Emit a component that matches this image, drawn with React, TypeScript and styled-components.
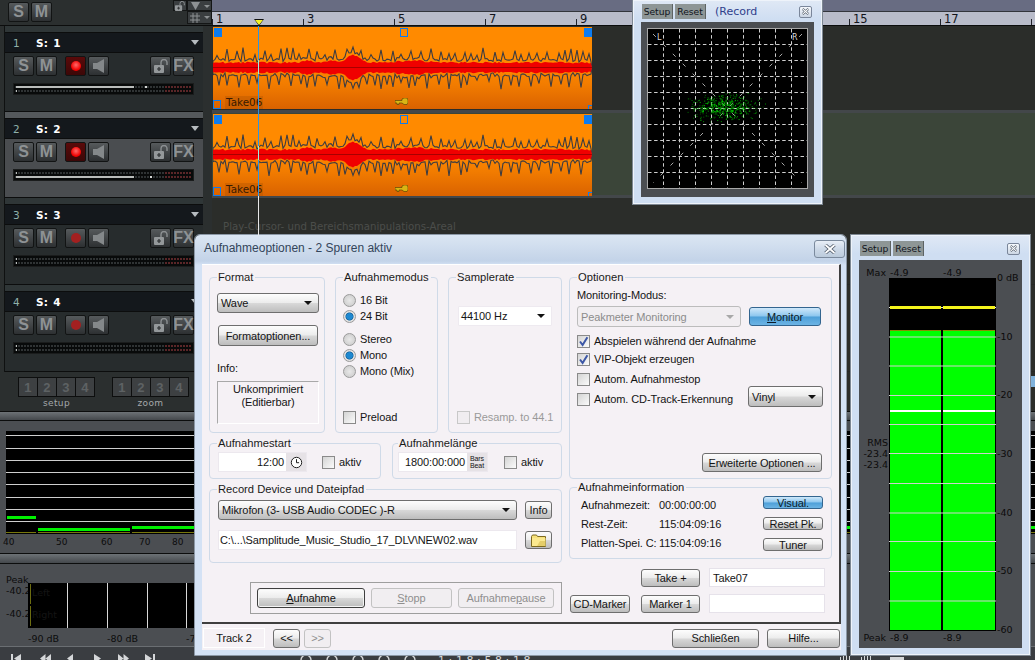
import { useMemo } from 'react';
import styled, { createGlobalStyle, css } from 'styled-components';

const GlobalStyle = createGlobalStyle`
  html, body { margin: 0; padding: 0; background: #2b2d2a; overflow: hidden; }
  * { box-sizing: border-box; }
`;

const MONO_UI = `"DejaVu Sans", sans-serif`;
const WIN_UI = `"Liberation Sans", Arial, sans-serif`;

function seeded(seed: number) {
  let s = seed;
  return () => {
    s = (s * 1664525 + 1013904223) % 4294967296;
    return s / 4294967296;
  };
}

/* ---------- waveform + scope data ---------- */

function buildWave() {
  const rnd = seeded(77);
  const W = 379;
  const C = 40.5;
  let upPeak = `M0 ${C}`;
  let downPeak = `M0 ${C}`;
  let upRms = `M0 ${C}`;
  let downRms = `M0 ${C}`;
  let nextUp = 3;
  let nextDown = 6;
  for (let x = 0; x <= W; x += 2) {
    const bump =
      8 * Math.exp(-((x - 140) ** 2) / 70) +
      2 * Math.exp(-((x - 95) ** 2) / 60) +
      2 * Math.exp(-((x - 118) ** 2) / 40) +
      2 * Math.exp(-((x - 200) ** 2) / 300);
    const rms = 4 + bump + rnd() * 1.8;
    let up = rms + 1 + rnd() * 3;
    let down = rms + 1 + rnd() * 3;
    if (x >= nextUp) {
      up = Math.max(up + 4, 12 + rnd() * 8);
      nextUp = x + 4 + rnd() * 7;
    }
    if (x >= nextDown) {
      down = Math.max(down + 4, 12 + rnd() * 10);
      nextDown = x + 4 + rnd() * 8;
    }
    upPeak += ` L${x} ${(C - up).toFixed(1)}`;
    downPeak += ` L${x} ${(C + down).toFixed(1)}`;
    upRms += ` L${x} ${(C - rms).toFixed(1)}`;
    downRms += ` L${x} ${(C + rms).toFixed(1)}`;
  }
  const close = ` L${W} ${C} Z`;
  return {
    peak: [upPeak + close, downPeak + close],
    rms: [upRms + close, downRms + close],
  };
}

function buildScatter() {
  const rnd = seeded(412);
  const gauss = () => (rnd() + rnd() + rnd() - 1.5) / 1.5;
  return Array.from({ length: 520 }, () => ({
    x: 78 + gauss() * 44,
    y: 79 + gauss() * 17,
    o: 0.35 + rnd() * 0.6,
  }));
}

/* ---------- page shell ---------- */

const Screen = styled.div`
  position: relative;
  width: 1035px;
  height: 660px;
  overflow: hidden;
  background: #2b2d2a;
  font-family: ${MONO_UI};
`;

const Daw = styled.div`
  display: flex;
  flex-direction: column;
  height: 660px;
`;

const Upper = styled.div`
  display: flex;
  height: 411px;
`;

const TrackColumn = styled.div`
  width: 212px;
  flex: none;
  background: #2b2f2f;
`;

const TopBar = styled.div`
  display: flex;
  justify-content: space-between;
  height: 26px;
  padding: 2px 0 0 8px;
  border-bottom: 1px solid #0c0d0d;
`;

const TopButtons = styled.div`
  display: flex;
`;

const SmallGrid = styled.div`
  display: grid;
  grid-template-columns: 14px 25px;
  grid-template-rows: 11px 13px;
  margin-top: -2px;
`;

const SmallCell = styled.div<{ $col?: number }>`
  display: flex;
  align-items: center;
  justify-content: center;
  gap: 3px;
  grid-column: ${(p) => p.$col ?? 'auto'};
  background: #3a3e40;
  border: 1px solid #141616;
  color: #8d9193;
`;

const TrackRail = styled.div`
  display: flex;
`;

const Rail = styled.div`
  width: 5px;
  border-right: 1px solid #0f1111;
  height: 346px;
  flex: none;
`;

const Tracks = styled.div`
  width: 198px;
  flex: none;
`;

const TrackBox = styled.div<{ $h: number; $active?: boolean }>`
  height: ${(p) => p.$h}px;
  border-bottom: 1px solid #0c0d0d;
  background: ${(p) => (p.$active ? '#4a4d50' : '#272c2d')};
`;

const TrackStrip = styled.div<{ $active?: boolean }>`
  height: 7px;
  background: ${(p) => (p.$active ? '#54585b' : '#2f3637')};
  border-bottom: 1px solid #0c0d0d;
`;

const TrackHead = styled.div`
  display: flex;
  align-items: center;
  height: 20px;
  padding-left: 8px;
  background: #14181c;
  border-bottom: 1px solid #0c0d0d;
  font-size: 10.5px;
  font-weight: 700;
  color: #fff;
`;

const TrackNo = styled.span`
  width: 23px;
  font-weight: 400;
  color: #8fb0aa;
`;

const TrackName = styled.span`
  flex: 1;
  letter-spacing: 0.3px;
  word-spacing: 1px;
`;

const Chevron = styled.i`
  width: 0;
  height: 0;
  margin-right: 4px;
  border-left: 4px solid transparent;
  border-right: 4px solid transparent;
  border-top: 5px solid #b7bcc0;
`;

const ButtonRow = styled.div`
  display: flex;
  padding: 3px 0 0 8px;
`;

const DarkBtn = styled.div<{ $w?: number; $big?: boolean; $gap?: number }>`
  display: flex;
  align-items: center;
  justify-content: center;
  width: ${(p) => p.$w ?? 21}px;
  height: 20px;
  margin-left: ${(p) => p.$gap ?? 2}px;
  border: 1px solid #121414;
  border-radius: 2px;
  background: linear-gradient(#565a5c, #2d3032);
  color: #8e9294;
  font-family: ${WIN_UI};
  font-weight: 700;
  font-size: 16px;
  &:first-child { margin-left: 0; }
`;

const RecBtn = styled(DarkBtn)<{ $armed?: boolean }>`
  background: ${(p) => (p.$armed ? 'linear-gradient(#5a0a0a, #3c0808)' : 'linear-gradient(#565a5c, #2d3032)')};
`;

const RecDot = styled.i<{ $armed?: boolean }>`
  width: 10px;
  height: 10px;
  border-radius: 50%;
  background: ${(p) => (p.$armed ? 'radial-gradient(circle at 50% 40%, #ff6a6a, #f00000 65%)' : '#a32020')};
`;

const LevelMeter = styled.div`
  display: flex;
  flex-direction: column;
  gap: 2px;
  width: 181px;
  height: 12px;
  margin: 7px 0 0 8px;
  padding: 2px 1px;
  background: #080a0a;
  border: 1px solid #1a1c1c;
`;

const LevelRow = styled.div`
  position: relative;
  height: 3px;
  background:
    repeating-linear-gradient(90deg, transparent 0 2px, #080a0a 2px 3px),
    linear-gradient(90deg, #2f3334 0 85%, #5a2628 85% 100%);
`;

const LevelFill = styled.i<{ $w: number }>`
  position: absolute;
  left: 1px;
  top: 0;
  bottom: 0;
  width: ${(p) => p.$w}px;
  background: #b9bcba;
`;

const LevelPeak = styled.i<{ $x: number }>`
  position: absolute;
  left: ${(p) => p.$x}px;
  top: 0;
  bottom: 0;
  width: 2px;
  background: #d6d8d6;
`;

const SetupRow = styled.div`
  display: flex;
  gap: 17px;
  padding: 5px 0 0 18px;
`;

const KeyGroup = styled.div`
  width: 77px;
  text-align: center;
  color: #a4a8aa;
  font-size: 9px;
  letter-spacing: 0.4px;
`;

const KeyRow = styled.div`
  display: flex;
  height: 20px;
  margin-bottom: 1px;
  border: 1px solid #0d0e0e;
  background: #0d0e0e;
  gap: 1px;
`;

const KeyCap = styled.span`
  flex: 1;
  display: flex;
  align-items: center;
  justify-content: center;
  background: #3d4042;
  color: #5e6264;
  font-family: ${WIN_UI};
  font-size: 13px;
  font-weight: 700;
`;

/* ---------- arrangement ---------- */

const Arrange = styled.div`
  position: relative;
  flex: 1;
  min-width: 0;
  background: #2b2d2a;
`;

const RulerTop = styled.div`
  height: 12px;
  background: #686c82;
  border-bottom: 1px solid #33353c;
`;

const Ruler = styled.div`
  display: flex;
  height: 14px;
  background: #b9bcca;
  border-bottom: 1px solid #0c0d0d;
`;

const RulerCell = styled.div`
  flex: none;
  width: 91px;
  position: relative;
  padding-left: 4px;
  font-size: 11.5px;
  line-height: 14px;
  color: #12141c;
  &::before {
    content: '';
    position: absolute;
    left: 0;
    bottom: 0;
    height: 6px;
    border-left: 1px solid #20222a;
  }
`;

const PlayCursor = styled.div`
  position: absolute;
  z-index: 3;
  left: 42px;
  top: 19px;
  width: 10px;
  height: 7px;
  background: #111;
  clip-path: polygon(0 0, 100% 0, 50% 100%);
  &::after {
    content: '';
    position: absolute;
    left: 1px;
    top: 1px;
    width: 8px;
    height: 5px;
    background: #f4f42a;
    clip-path: polygon(0 0, 100% 0, 50% 100%);
  }
`;

const CursorLine = styled.div`
  position: absolute;
  z-index: 2;
  left: 46px;
  top: 26px;
  width: 1px;
  height: 210px;
  background: linear-gradient(
    #2e95e4 0 34px,
    #9fe8e0 34px 48px,
    #2e95e4 48px 120px,
    #9fe8e0 120px 134px,
    #2e95e4 134px 170px,
    #e8e8e8 170px 210px
  );
`;

const Lane = styled.div<{ $h: number; $green?: boolean }>`
  height: ${(p) => p.$h}px;
  padding: 1px 0 0 1px;
  background: ${(p) => (p.$green ? '#3b4539' : '#2b2d2a')};
  border-bottom: 3px solid #43474a;
`;

const PlainLane = styled.div<{ $h: number }>`
  height: ${(p) => p.$h}px;
  padding: 23px 0 0 11px;
  border-bottom: 1px solid #262826;
  color: #4b4d4a;
  font-size: 10.2px;
`;

const ScrollTail = styled.div`
  display: flex;
  justify-content: flex-end;
  padding-top: 4px;
`;

const ScrollThumb = styled.i`
  width: 5px;
  height: 11px;
  background: #7fb2dc;
`;

const Clip = styled.div`
  position: relative;
  width: 379px;
  height: 82px;
  background: linear-gradient(#ff8a00 0 45%, #f27c00 70%, #d96200);
`;

const WaveSvg = styled.svg`
  display: block;
`;

const Handle = styled.i<{ $x: number; $y: number; $fill?: boolean }>`
  position: absolute;
  left: ${(p) => p.$x}px;
  top: ${(p) => p.$y}px;
  width: 8px;
  height: 9px;
  border: 1px solid #0d7cf0;
  background: ${(p) => (p.$fill ? '#0d7cf0' : 'transparent')};
`;

const ClipName = styled.span`
  position: absolute;
  left: 12px;
  bottom: 0;
  padding: 0 1px;
  font-size: 10.4px;
  line-height: 13px;
  color: #3a1a00;
  background: rgba(150, 70, 0, 0.25);
`;

const KeyIcon = styled.svg`
  position: absolute;
  left: 182px;
  top: 71px;
`;

const ClipEnd = styled.i`
  position: absolute;
  right: 0;
  bottom: 0;
  width: 4px;
  height: 4px;
  border-left: 1px solid #0d7cf0;
  border-top: 1px solid #0d7cf0;
`;

/* ---------- lower panels ---------- */

const GreyStrip = styled.div<{ $h: number }>`
  height: ${(p) => p.$h}px;
  background: linear-gradient(#6d7276, #44484c);
  border-top: 1px solid #0c0d0d;
  border-bottom: 1px solid #0c0d0d;
  flex: none;
`;

const SpectrumPanel = styled.div`
  height: 132px;
  flex: none;
  padding: 10px 0 0 6px;
  background: #4b4e52;
`;

const SpectrumFace = styled.svg`
  display: block;
  background: #000;
`;

const Axis = styled.div`
  display: flex;
  margin: 3px 0 0 -3px;
  color: #0c0c0c;
  font-size: 9px;
`;

const AxisTick = styled.span<{ $w: number }>`
  width: ${(p) => p.$w}px;
  flex: none;
`;

const PeakPanel = styled.div`
  display: grid;
  grid-template-columns: 22px 1fr;
  height: 82px;
  flex: none;
  padding: 10px 0 0 6px;
  background: #4b4e52;
  color: #0c0c0c;
  font-size: 9.5px;
`;

const PeakLabels = styled.div`
  display: flex;
  flex-direction: column;
  line-height: 11px;
  & > :nth-child(3) { margin-top: 12px; }
`;

const PeakChart = styled.div`
  position: relative;
  width: 812px;
  height: 45px;
  margin-top: 9px;
  background: #000;
  color: #141414;
`;

const Channel = styled.span<{ $top: number }>`
  position: absolute;
  left: 2px;
  top: ${(p) => p.$top}px;
  padding-left: 1px;
  border-left: 1px solid #6c6c10;
  height: 20px;
  line-height: 18px;
`;

const DbLine = styled.i<{ $x: number }>`
  position: absolute;
  left: ${(p) => p.$x}px;
  top: 0;
  bottom: 0;
  width: 1px;
  background: #d8d8d8;
`;

const DbAxis = styled.div`
  display: flex;
  grid-column: 2;
  margin-top: 2px;
`;

const DbTick = styled.span`
  width: 79px;
  flex: none;
`;

const Transport = styled.div`
  display: flex;
  align-items: flex-start;
  flex: 1;
  padding: 7px 0 0 11px;
  background: #3a3d41;
  border-top: 1px solid #6a6e72;
  color: #d8d8d8;
  overflow: hidden;
`;

const TransportIcon = styled.svg<{ $gap: number }>`
  flex: none;
  margin-right: ${(p) => p.$gap}px;
  fill: #d5d7d9;
`;

const Counter = styled.span`
  flex: none;
  width: 402px;
  margin-left: 8px;
  font-size: 11px;
  letter-spacing: 3.6px;
`;

/* ---------- floating windows ---------- */

const FloatWindow = styled.div<{ $x: number; $y: number; $w: number; $h: number }>`
  position: absolute;
  left: ${(p) => p.$x}px;
  top: ${(p) => p.$y}px;
  width: ${(p) => p.$w}px;
  height: ${(p) => p.$h}px;
  padding: 0 7px;
  background: linear-gradient(#dfe8f5, #cfdef2 18px);
  border: 1px solid #eef3fa;
  outline: 1px solid #7d8792;
`;

const ToolHead = styled.div<{ $h: number }>`
  display: flex;
  align-items: center;
  gap: 2px;
  height: ${(p) => p.$h}px;
  padding-left: 1px;
`;

const ToolBtn = styled.span`
  display: flex;
  align-items: center;
  justify-content: center;
  width: 31px;
  height: 15px;
  background: #8e9696;
  border-right: 1px solid #5d6363;
  color: #10141c;
  font-size: 9.2px;
`;

const WinTitle = styled.span`
  flex: 1;
  margin-left: 7px;
  color: #2f3f8c;
  font-size: 11px;
`;

const MiniClose = styled.span`
  display: flex;
  align-items: center;
  justify-content: center;
  width: 13px;
  height: 12px;
  margin-right: 2px;
  border: 1px solid #7a869a;
  border-radius: 2px;
  background: linear-gradient(#f6f9fd, #ccd6e4);
`;

const ScopePanel = styled.div`
  padding: 6px;
  height: 175px;
  background: #4b4e52;
`;

const ScopeFace = styled.svg`
  display: block;
  background: #000;
  outline: 1px solid #a8a8a8;
  outline-offset: -1px;
`;

const MeterPanel = styled.div`
  display: grid;
  grid-template-columns: 30px 107px 1fr;
  grid-template-rows: 18px 353px 1fr;
  height: 388px;
  margin-top: -1px;
  background: #4b4e52;
  color: #0b0b0b;
  font-size: 9.5px;
`;

const MeterLegend = styled.span`
  display: flex;
  align-items: flex-end;
  justify-content: flex-end;
  padding-right: 3px;
`;

const MeterValues = styled.span`
  display: flex;
  align-items: flex-end;
  padding-left: 1px;
  & > span { width: 54px; }
`;

const RmsColumn = styled.div`
  display: flex;
  flex-direction: column;
  align-items: flex-end;
  padding: 159px 1px 0 0;
  line-height: 11px;
`;

const MeterFace = styled.svg`
  display: block;
  background: #000;
`;

const ScaleColumn = styled.div`
  display: flex;
  flex-direction: column;
  justify-content: space-between;
  height: 364px;
  margin-top: -6px;
  padding-left: 1px;
  line-height: 12px;
`;

const MeterFoot = styled(MeterValues)`
  align-items: flex-start;
  padding-top: 1px;
`;

const MeterFootLegend = styled(MeterLegend)`
  align-items: flex-start;
  padding-top: 1px;
`;

/* ---------- recording dialog ---------- */

const Dialog = styled.div`
  position: absolute;
  left: 195px;
  top: 235px;
  width: 651px;
  height: 420px;
  padding: 0 5px 5px 7px;
  border-radius: 5px 5px 0 0;
  background: linear-gradient(#dbe6f3, #c3d3e8 26px, #d4e2f5 30px);
  outline: 1px solid #8c98a6;
  font-family: ${WIN_UI};
  font-size: 11px;
  letter-spacing: -0.1px;
  color: #141414;
`;

const DialogTitle = styled.div`
  display: flex;
  align-items: center;
  justify-content: space-between;
  height: 29px;
  padding: 0 0 4px 2px;
  color: #33455a;
  font-size: 12px;
  letter-spacing: 0;
`;

const DialogClose = styled.span`
  display: flex;
  align-items: center;
  justify-content: center;
  width: 31px;
  height: 18px;
  margin: 3px -4px 0 0;
  border: 1px solid #7b8a9d;
  border-radius: 3px;
  background: linear-gradient(#e8eef6, #cdd9e8 50%, #bccbdc);
`;

const DialogBody = styled.div`
  height: 386px;
  background: #f5f1f5;
`;

const MainPanel = styled.div`
  display: flex;
  gap: 7px;
  height: 360px;
  padding: 5px 0 0 7px;
  border-top: 1px solid #fff;
  border-right: 2px solid #3f3f3f;
  border-bottom: 2px solid #3f3f3f;
`;

const LeftCol = styled.div`
  width: 353px;
  flex: none;
`;

const RightCol = styled.div`
  width: 263px;
  flex: none;
`;

const Row = styled.div<{ $gap: number; $top?: number }>`
  display: flex;
  gap: ${(p) => p.$gap}px;
  margin-top: ${(p) => p.$top ?? 0}px;
`;

const Group = styled.fieldset<{ $w: number; $h: number; $top?: number; $legend?: number }>`
  flex: none;
  min-width: 0;
  width: ${(p) => p.$w}px;
  height: ${(p) => p.$h}px;
  margin: ${(p) => p.$top ?? 0}px 0 0;
  padding: 0 7px;
  border: 1px solid #cfdae8;
  border-radius: 4px;
  & > legend {
    margin-left: ${(p) => p.$legend ?? 0}px;
    padding: 0 2px 0 1px;
    line-height: 14px;
    font-size: 11.2px;
    letter-spacing: 0;
    color: #1a1a1a;
  }
`;

const buttonFace = css`
  background: linear-gradient(#fdfdfd, #ececec 48%, #d8d8d8 52%, #bdbdbd);
  border: 1px solid #6e6e6e;
  border-radius: 3px;
  color: #141414;
`;

const Btn = styled.div<{ $w: number; $h: number; $tone?: 'blue' | 'off' | 'default' }>`
  display: flex;
  align-items: center;
  justify-content: center;
  flex: none;
  width: ${(p) => p.$w}px;
  height: ${(p) => p.$h}px;
  white-space: nowrap;
  ${buttonFace}
  ${(p) =>
    p.$tone === 'blue' &&
    css`
      background: linear-gradient(#cfe8fa, #8cc6ee 48%, #4d9fd8 52%, #6cb4e4);
      border-color: #33658f;
      color: #0c1c28;
    `}
  ${(p) =>
    p.$tone === 'off' &&
    css`
      background: #f1eef1;
      border-color: #c2c2c2;
      color: #8f8f8f;
    `}
  ${(p) =>
    p.$tone === 'default' &&
    css`
      border: 1px solid #3f3f3f;
      box-shadow: inset 0 0 0 1px #f4f4f4;
    `}
  u { text-underline-offset: 1px; }
`;

const Combo = styled.div<{ $w: number; $h: number; $plain?: boolean; $off?: boolean }>`
  display: flex;
  align-items: center;
  justify-content: space-between;
  flex: none;
  width: ${(p) => p.$w}px;
  height: ${(p) => p.$h}px;
  padding: 0 6px 0 3px;
  white-space: nowrap;
  ${buttonFace}
  ${(p) =>
    p.$plain &&
    css`
      padding-left: 2px;
      background: #fff;
      border-color: #eeeaf0;
      border-radius: 1px;
    `}
  ${(p) =>
    p.$off &&
    css`
      background: #f1eef1;
      border-color: #bcbcbc;
      color: #8c8c8c;
    `}
`;

const ComboArrow = styled.i<{ $off?: boolean }>`
  width: 0;
  height: 0;
  border-left: 4px solid transparent;
  border-right: 4px solid transparent;
  border-top: 4px solid ${(p) => (p.$off ? '#a8a8a8' : '#111')};
`;

const FormatBody = styled.div`
  display: flex;
  flex-direction: column;
  padding-top: 9px;
`;

const FormatBtn = styled(Btn)`
  margin: 12px 0 0 1px;
`;

const InfoLabel = styled.div`
  margin-top: 16px;
  line-height: 13px;
`;

const InfoBox = styled.div`
  height: 43px;
  margin-top: 6px;
  width: 102px;
  padding-top: 1px;
  text-align: center;
  line-height: 13px;
  border: 1px solid #fff;
  border-top-color: #a8a8a8;
  border-left-color: #a8a8a8;
`;

const RadioList = styled.div<{ $top: number }>`
  margin-top: ${(p) => p.$top}px;
`;

const OptionRow = styled.label<{ $h?: number; $off?: boolean }>`
  display: flex;
  align-items: center;
  gap: 4px;
  height: ${(p) => p.$h ?? 16}px;
  white-space: nowrap;
  color: ${(p) => (p.$off ? '#9a9a9a' : 'inherit')};
`;

const RadioDot = styled.i<{ $on?: boolean }>`
  flex: none;
  width: 13px;
  height: 13px;
  border-radius: 50%;
  border: 1px solid #9a9a9a;
  background: ${(p) =>
    p.$on
      ? 'radial-gradient(circle, #1e88d0 0 3px, #0a5c98 3.5px, #e6e6e6 4.5px, #d0d0d0)'
      : 'radial-gradient(circle, #e8e8e8, #c8c8c8)'};
`;

const CheckBox = styled.i<{ $off?: boolean }>`
  flex: none;
  display: flex;
  align-items: center;
  justify-content: center;
  width: 13px;
  height: 13px;
  border: 1px solid ${(p) => (p.$off ? '#c8c8c8' : '#8a8a8a')};
  background: ${(p) => (p.$off ? '#f0edf0' : 'linear-gradient(135deg, #d4d4d4, #fbfbfb)')};
`;

const Spacer = styled.div<{ $h: number }>`
  height: ${(p) => p.$h}px;
`;

const SampleBody = styled.div`
  padding: 22px 0 0 2px;
`;

const ResampRow = styled(OptionRow)`
  margin: 83px 0 0 -1px;
`;

const FieldRow = styled.div`
  display: flex;
  align-items: center;
  margin-top: 2px;
`;

const TimeField = styled.div<{ $w: number; $left: number }>`
  display: flex;
  align-items: center;
  justify-content: flex-end;
  flex: none;
  width: ${(p) => p.$w}px;
  height: 20px;
  margin-left: ${(p) => p.$left}px;
  background: #fff;
  border: 1px solid #ece8ee;
  white-space: nowrap;
  font-size: 11px;
`;

const FieldSuffix = styled.span`
  display: flex;
  flex-direction: column;
  align-items: center;
  justify-content: center;
  align-self: stretch;
  width: 20px;
  margin-left: 2px;
  background: #e6e2e6;
  font-size: 7px;
  line-height: 7px;
`;

const AktivRow = styled(OptionRow)<{ $left: number }>`
  margin-left: ${(p) => p.$left}px;
`;

const DeviceBody = styled.div`
  display: grid;
  grid-template-columns: 299px 27px;
  column-gap: 8px;
  align-items: center;
  padding: 4px 0 0 1px;
`;

const PathField = styled.div`
  display: flex;
  align-items: center;
  height: 20px;
  margin-top: 10px;
  padding-left: 1px;
  background: #fff;
  border: 1px solid #ece8ee;
  white-space: nowrap;
  overflow: hidden;
`;

const SideBtn = styled(Btn)<{ $down?: number }>`
  margin-top: ${(p) => p.$down ?? 0}px;
`;

const ActionBox = styled.div`
  display: flex;
  justify-content: space-between;
  width: 312px;
  height: 32px;
  margin: 19px 0 0 41px;
  padding: 5px 7px 0 6px;
  border: 1px solid #9e9e9e;
`;

const OptionsBody = styled.div`
  display: flex;
  flex-direction: column;
`;

const MonitorLabel = styled.div`
  margin-top: 5px;
  line-height: 13px;
`;

const MonitorRow = styled.div`
  display: flex;
  align-items: center;
  gap: 8px;
  margin-top: 4px;
`;

const AutoRow = styled.div`
  display: flex;
  align-items: center;
  justify-content: space-between;
  padding-right: 1px;
  height: 18px;
`;

const VinylCombo = styled(Combo)`
  margin-top: -5px;
`;

const ExtraBtn = styled(Btn)`
  align-self: flex-end;
  margin: 45px 2px 0 0;
`;

const InfoBody = styled.div`
  display: flex;
  justify-content: space-between;
  padding: 2px 1px 0 4px;
`;

const InfoLines = styled.div`
  display: grid;
  grid-template-columns: 78px auto;
  grid-auto-rows: 19px;
  align-items: center;
  margin-top: -1px;
  white-space: nowrap;
`;

const InfoButtons = styled.div`
  display: flex;
  flex-direction: column;
  gap: 8px;
`;

const TakeRow = styled.div<{ $top: number }>`
  display: flex;
  align-items: center;
  margin-top: ${(p) => p.$top}px;
  padding-left: 1px;
`;

const TakeBtn = styled(Btn)<{ $left: number }>`
  margin-left: ${(p) => p.$left}px;
`;

const TakeInput = styled.div`
  display: flex;
  align-items: center;
  width: 116px;
  height: 19px;
  margin-left: 9px;
  padding-left: 3px;
  background: #fff;
  border: 1px solid #e6e2ea;
`;

const DialogFooter = styled.div`
  display: flex;
  align-items: center;
  height: 26px;
  padding: 2px 1px 0 1px;
`;

const TrackTab = styled.div`
  display: flex;
  align-items: center;
  justify-content: center;
  width: 62px;
  height: 20px;
  margin-right: 8px;
  border: 1px solid #fff;
`;

const NavGap = styled.div<{ $w: number }>`
  width: ${(p) => p.$w}px;
  flex: none;
`;

/* ---------- little drawings ---------- */

function SpeakerIcon() {
  return (
    <svg width="11" height="14" viewBox="0 0 11 14">
      <path d="M0 4h4l7-4v14l-7-4H0z" fill="#84888a" />
    </svg>
  );
}

function LockIcon({ tiny }: { tiny?: boolean }) {
  const size = tiny ? 12 : 16;
  return (
    <svg width={size} height={size - 2} viewBox="0 0 16 14">
      <path d="M8 6V3.5a3 3 0 0 1 6 0V6" fill="none" stroke="#8c9092" strokeWidth="1.4" />
      <rect x="1" y="6" width="10" height="8" rx="1" fill="#94989a" />
      <path d="M6 8v4M4 10h4" stroke="#2b2e30" strokeWidth="1.2" />
    </svg>
  );
}

function ClockIcon() {
  return (
    <svg width="13" height="13" viewBox="0 0 13 13">
      <circle cx="6.5" cy="6.5" r="5.2" fill="#fff" stroke="#222" />
      <path d="M6.5 3.2v3.5h2.6" fill="none" stroke="#222" />
    </svg>
  );
}

function FolderIcon() {
  return (
    <svg width="15" height="13" viewBox="0 0 15 13">
      <path d="M.5 2.5l1-1.5h4l1 1.5h8V12.5H.5z" fill="#f7e27a" stroke="#7d6a20" />
      <path d="M1 4h13.5v8H1z" fill="#fbe98e" />
      <path d="M9 7h5v5H6z" fill="#dcc25a" opacity=".7" />
    </svg>
  );
}

function TickMark() {
  return (
    <svg width="11" height="11" viewBox="0 0 11 11">
      <path d="M2 5.5L4.6 9 9.4 1.2" fill="none" stroke="#3d57a6" strokeWidth="2" />
    </svg>
  );
}

function CrossIcon({ w, h }: { w: number; h: number }) {
  return (
    <svg width={w} height={h} viewBox="0 0 14 10">
      <path d="M2.5 1l9 8M11.5 1l-9 8" stroke="#4a5564" strokeWidth="3.4" />
      <path d="M2.5 1l9 8M11.5 1l-9 8" stroke="#fff" strokeWidth="1.8" />
    </svg>
  );
}

function WaveClip({ peak, rms }: { peak: string[]; rms: string[] }) {
  return (
    <Clip>
      <WaveSvg width="379" height="82" viewBox="0 0 379 82">
        <path d={peak[0]} fill="none" stroke="#3c3c42" strokeWidth="1.1" />
        <path d={peak[1]} fill="none" stroke="#3c3c42" strokeWidth="1.1" />
        <path d={rms[0]} fill="#f00000" />
        <path d={rms[1]} fill="#f00000" />
        <path d="M0 40.5H379" stroke="#a80000" />
      </WaveSvg>
      <Handle $x={1} $y={1} $fill />
      <Handle $x={187} $y={1} />
      <Handle $x={371} $y={1} $fill />
      <Handle $x={0} $y={73} />
      <ClipName>Take06</ClipName>
      <KeyIcon width="13" height="7" viewBox="0 0 13 7">
        <path d="M0 2.5h7V1l2-1h3l1 2v3l-1 1.5H9l-2-1.5H4v1.5H2V5H0z" fill="#d9b514" stroke="#4a3c05" strokeWidth=".6" />
      </KeyIcon>
      <ClipEnd />
    </Clip>
  );
}

function ChannelTrack({ no, active, armed, top, bottom }: { no: number; active?: boolean; armed?: boolean; top?: [number, number]; bottom?: [number, number] }) {
  const h = no < 3 ? 86 : 87;
  return (
    <TrackBox $h={h} $active={active}>
      <TrackStrip $active={active} />
      <TrackHead>
        <TrackNo>{no}</TrackNo>
        <TrackName>S: {no}</TrackName>
        <Chevron />
      </TrackHead>
      <ButtonRow>
        <DarkBtn>S</DarkBtn>
        <DarkBtn>M</DarkBtn>
        <RecBtn $armed={armed} $gap={8}>
          <RecDot $armed={armed} />
        </RecBtn>
        <DarkBtn>
          <SpeakerIcon />
        </DarkBtn>
        <DarkBtn $gap={41}>
          <LockIcon />
        </DarkBtn>
        <DarkBtn>FX</DarkBtn>
      </ButtonRow>
      <LevelMeter>
        <LevelRow>
          <LevelFill $w={top ? top[0] : 1} />
          {top && <LevelPeak $x={top[1]} />}
        </LevelRow>
        <LevelRow>
          <LevelFill $w={bottom ? bottom[0] : 1} />
          {bottom && <LevelPeak $x={bottom[1]} />}
        </LevelRow>
      </LevelMeter>
    </TrackBox>
  );
}

// bars 11 and 13 sit behind the goniometer window
const RULER = ['1', '3', '5', '7', '9', '', '', '15', '17', ''];
const SPECTRUM_LINES = [4, 17, 29, 41, 53, 66, 78, 90];
const GRID = [16, 32, 48, 64, 80, 96, 112, 128, 144];
const METER_LINES = [58.5, 87.5, 117, 146, 175, 205, 234.5, 263, 293, 322.5];
const DIALS = [0, 1, 2, 3, 4];

export default function App() {
  const wave = useMemo(buildWave, []);
  const scatter = useMemo(buildScatter, []);

  return (
    <Screen>
      <GlobalStyle />
      <Daw>
        <Upper>
          <TrackColumn>
            <TopBar>
              <TopButtons>
                <DarkBtn>S</DarkBtn>
                <DarkBtn>M</DarkBtn>
              </TopButtons>
              <SmallGrid>
                <SmallCell>
                  <LockIcon tiny />
                </SmallCell>
                <SmallCell>
                  <svg width="20" height="8" viewBox="0 0 20 8">
                    <path d="M1 0h9L5.5 8z" fill="#8d9193" />
                    <path d="M14 3h6l-3 3z" fill="#8d9193" />
                  </svg>
                </SmallCell>
                <SmallCell $col={2}>
                  <svg width="20" height="10" viewBox="0 0 20 10">
                    <path d="M3 0v10M7 0v10M0 3h10M0 7h10" stroke="#8d9193" />
                    <path d="M14 3h6l-3 3z" fill="#8d9193" />
                  </svg>
                </SmallCell>
              </SmallGrid>
            </TopBar>
            <TrackRail>
              <Rail />
              <Tracks>
                <ChannelTrack no={1} armed top={[118, 130]} />
                <ChannelTrack no={2} active armed bottom={[118, 135]} />
                <ChannelTrack no={3} />
                <ChannelTrack no={4} />
              </Tracks>
            </TrackRail>
            <SetupRow>
              <KeyGroup>
                <KeyRow>
                  <KeyCap>1</KeyCap>
                  <KeyCap>2</KeyCap>
                  <KeyCap>3</KeyCap>
                  <KeyCap>4</KeyCap>
                </KeyRow>
                setup
              </KeyGroup>
              <KeyGroup>
                <KeyRow>
                  <KeyCap>1</KeyCap>
                  <KeyCap>2</KeyCap>
                  <KeyCap>3</KeyCap>
                  <KeyCap>4</KeyCap>
                </KeyRow>
                zoom
              </KeyGroup>
            </SetupRow>
          </TrackColumn>
          <Arrange>
            <RulerTop />
            <Ruler>
              {RULER.map((n, i) => (
                <RulerCell key={i}>{n}</RulerCell>
              ))}
            </Ruler>
            <PlayCursor />
            <CursorLine />
            <Lane $h={87}>
              <WaveClip peak={wave.peak} rms={wave.rms} />
            </Lane>
            <Lane $h={85} $green>
              <WaveClip peak={wave.peak} rms={wave.rms} />
            </Lane>
            <PlainLane $h={87}>Play-Cursor- und Bereichsmanipulations-Areal</PlainLane>
            <PlainLane $h={87} />
            <ScrollTail>
              <ScrollThumb />
            </ScrollTail>
          </Arrange>
        </Upper>

        <GreyStrip $h={10} />
        <SpectrumPanel>
          <SpectrumFace width="1029" height="103" viewBox="0 0 1029 103">
            {SPECTRUM_LINES.map((y) => (
              <rect key={y} x="0" y={y} width="1029" height="1" fill="#cfcfcf" />
            ))}
            <rect x="1" y="85" width="29" height="3" fill="#00f000" />
            <rect x="32" y="97" width="92" height="3" fill="#00f000" />
            <rect x="126" y="95" width="903" height="3" fill="#00f000" />
            <rect x="0" y="101" width="30" height="1" fill="#77770c" />
            <rect x="32" y="101" width="92" height="1" fill="#77770c" />
            <rect x="126" y="101" width="903" height="1" fill="#77770c" />
          </SpectrumFace>
          <Axis>
            <AxisTick $w={53}>40</AxisTick>
            <AxisTick $w={45}>50</AxisTick>
            <AxisTick $w={38}>60</AxisTick>
            <AxisTick $w={33}>70</AxisTick>
            <AxisTick $w={30}>80</AxisTick>
          </Axis>
        </SpectrumPanel>
        <GreyStrip $h={11} />
        <PeakPanel>
          <PeakLabels>
            <span>Peak</span>
            <span>-40.2</span>
            <span>-40.2</span>
          </PeakLabels>
          <PeakChart>
            <Channel $top={1}>Left</Channel>
            <Channel $top={23}>Right</Channel>
            <DbLine $x={39} />
            <DbLine $x={79} />
            <DbLine $x={119} />
            <DbLine $x={158} />
          </PeakChart>
          <DbAxis>
            <DbTick>-90 dB</DbTick>
            <DbTick>-80 dB</DbTick>
            <DbTick>-70 dB</DbTick>
          </DbAxis>
        </PeakPanel>
        <Transport>
          <TransportIcon $gap={19} width="10" height="9" viewBox="0 0 10 9">
            <path d="M0 0h2v9H0zM10 0v9L3 4.5z" />
          </TransportIcon>
          <TransportIcon $gap={16} width="11" height="9" viewBox="0 0 11 9">
            <path d="M5.5 0v9L0 4.5zM11 0v9L5.5 4.5z" />
          </TransportIcon>
          <TransportIcon $gap={21} width="6" height="9" viewBox="0 0 6 9">
            <path d="M6 0v9L0 4.5z" />
          </TransportIcon>
          <TransportIcon $gap={17} width="7" height="9" viewBox="0 0 7 9">
            <path d="M0 0v9l7-4.5z" />
          </TransportIcon>
          <TransportIcon $gap={16} width="11" height="9" viewBox="0 0 11 9">
            <path d="M0 0v9l5.5-4.5zM5.5 0v9L11 4.5z" />
          </TransportIcon>
          <TransportIcon $gap={145} width="10" height="9" viewBox="0 0 10 9">
            <path d="M0 0v9l7-4.5zM8 0h2v9H8z" />
          </TransportIcon>
          {DIALS.map((d) => (
            <TransportIcon key={d} $gap={14} width="12" height="12" viewBox="0 0 12 12">
              <circle cx="6" cy="6" r="5" fill="none" stroke="#d5d7d9" strokeWidth="1.4" />
            </TransportIcon>
          ))}
          <Counter>1:18:58:18</Counter>
          <TransportIcon $gap={0} width="72" height="6" viewBox="0 0 72 6">
            <path d="M0 6V3h1v3zM3 6V1h1v5zM6 6V0h1v6zM9 6V2h1v4zM21 6V3h1v3zM24 6V1h1v5zM27 6V0h1v6zM30 6V2h1v4zM48 1h18v1H48zM50 3h14v3H50z" />
          </TransportIcon>
        </Transport>
      </Daw>

      {/* goniometer */}
      <FloatWindow $x={633} $y={0} $w={189} $h={204}>
        <ToolHead $h={21}>
          <ToolBtn>Setup</ToolBtn>
          <ToolBtn>Reset</ToolBtn>
          <WinTitle>(Record</WinTitle>
          <MiniClose>
            <CrossIcon w={9} h={7} />
          </MiniClose>
        </ToolHead>
        <ScopePanel>
          <ScopeFace width="161" height="161" viewBox="0 0 161 161">
            {GRID.map((g) => (
              <g key={g} stroke="#cfcfcf" strokeDasharray="3.5 2.6">
                <path d={`M${g + 0.5} 1V160`} />
                <path d={`M1 ${g + 0.5}H160`} />
              </g>
            ))}
            <path d="M6 6L155 155M155 6L6 155" stroke="#aaaaaa" strokeDasharray="4 10" />
            <text x="10" y="12" fontSize="8" fill="#d8d8d8" fontFamily={MONO_UI}>L</text>
            <text x="145" y="12" fontSize="8" fill="#d8d8d8" fontFamily={MONO_UI}>R</text>
            {scatter.map((d, i) => (
              <rect key={i} x={d.x} y={d.y} width="1" height="1" fill="#00c800" opacity={d.o} />
            ))}
          </ScopeFace>
        </ScopePanel>
      </FloatWindow>

      {/* level meter */}
      <FloatWindow $x={851} $y={235} $w={179} $h={420}>
        <ToolHead $h={25}>
          <ToolBtn>Setup</ToolBtn>
          <ToolBtn>Reset</ToolBtn>
          <WinTitle />
          <MiniClose>
            <CrossIcon w={9} h={7} />
          </MiniClose>
        </ToolHead>
        <MeterPanel>
          <MeterLegend>Max</MeterLegend>
          <MeterValues>
            <span>-4.9</span>
            <span>-4.9</span>
          </MeterValues>
          <span />
          <RmsColumn>
            <span>RMS</span>
            <span>-23.4</span>
            <span>-23.4</span>
          </RmsColumn>
          <MeterFace width="107" height="353" viewBox="0 0 107 353">
            <rect x="1" y="52" width="51" height="300" fill="#00ff00" />
            <rect x="54" y="52" width="52" height="300" fill="#00ff00" />
            <rect x="1" y="52" width="51" height="1" fill="#8a8a00" />
            <rect x="54" y="52" width="52" height="1" fill="#8a8a00" />
            <rect x="1" y="132" width="51" height="2" fill="#fff" />
            <rect x="54" y="132" width="52" height="2" fill="#fff" />
            {METER_LINES.map((y) => (
              <rect key={y} x="0" y={y} width="107" height="1" fill="#cfcfcf" />
            ))}
            <rect x="1" y="28" width="51" height="3" fill="#f4f41c" />
            <rect x="54" y="28" width="52" height="3" fill="#f4f41c" />
            <rect x="52" y="29" width="2" height="1" fill="#e8e8e8" />
            <rect x="0" y="29" width="1" height="1" fill="#e8e8e8" />
            <rect x="106" y="29" width="1" height="1" fill="#e8e8e8" />
          </MeterFace>
          <ScaleColumn>
            <span>0 dB</span>
            <span>-10</span>
            <span>-20</span>
            <span>-30</span>
            <span>-40</span>
            <span>-50</span>
            <span>-60</span>
          </ScaleColumn>
          <MeterFootLegend>Peak</MeterFootLegend>
          <MeterFoot>
            <span>-8.9</span>
            <span>-8.9</span>
          </MeterFoot>
        </MeterPanel>
      </FloatWindow>

      <Dialog>
        <DialogTitle>
          Aufnahmeoptionen - 2 Spuren aktiv
          <DialogClose>
            <CrossIcon w={14} h={10} />
          </DialogClose>
        </DialogTitle>
        <DialogBody>
          <MainPanel>
            <LeftCol>
              <Row $gap={10}>
                <Group $w={116} $h={163}>
                  <legend>Format</legend>
                  <FormatBody>
                    <Combo $w={102} $h={20}>
                      Wave
                      <ComboArrow />
                    </Combo>
                    <FormatBtn $w={100} $h={21}>Formatoptionen...</FormatBtn>
                    <InfoLabel>Info:</InfoLabel>
                    <InfoBox>
                      Unkomprimiert
                      <br />
                      (Editierbar)
                    </InfoBox>
                  </FormatBody>
                </Group>
                <Group $w={103} $h={163}>
                  <legend>Aufnahmemodus</legend>
                  <RadioList $top={8}>
                    <OptionRow><RadioDot />16 Bit</OptionRow>
                    <OptionRow><RadioDot $on />24 Bit</OptionRow>
                  </RadioList>
                  <RadioList $top={7}>
                    <OptionRow><RadioDot />Stereo</OptionRow>
                    <OptionRow><RadioDot $on />Mono</OptionRow>
                    <OptionRow><RadioDot />Mono (Mix)</OptionRow>
                  </RadioList>
                  <Spacer $h={30} />
                  <OptionRow><CheckBox />Preload</OptionRow>
                </Group>
                <Group $w={114} $h={163}>
                  <legend>Samplerate</legend>
                  <SampleBody>
                    <Combo $w={94} $h={20} $plain>
                      44100 Hz
                      <ComboArrow />
                    </Combo>
                    <ResampRow $off>
                      <CheckBox $off />
                      Resamp. to 44.1
                    </ResampRow>
                  </SampleBody>
                </Group>
              </Row>
              <Row $gap={11} $top={3}>
                <Group $w={172} $h={43}>
                  <legend>Aufnahmestart</legend>
                  <FieldRow>
                    <TimeField $w={89} $left={1}>
                      12:00
                      <FieldSuffix>
                        <ClockIcon />
                      </FieldSuffix>
                    </TimeField>
                    <AktivRow $left={15}>
                      <CheckBox />
                      aktiv
                    </AktivRow>
                  </FieldRow>
                </Group>
                <Group $w={170} $h={43} $legend={-2}>
                  <legend>Aufnahmelänge</legend>
                  <FieldRow>
                    <TimeField $w={90} $left={-2}>
                      1800:00:000
                      <FieldSuffix>
                        <span>Bars</span>
                        <span>Beat</span>
                      </FieldSuffix>
                    </TimeField>
                    <AktivRow $left={16}>
                      <CheckBox />
                      aktiv
                    </AktivRow>
                  </FieldRow>
                </Group>
              </Row>
              <Group $w={353} $h={81} $top={3}>
                <legend>Record Device und Dateipfad</legend>
                <DeviceBody>
                  <Combo $w={299} $h={20}>
                    Mikrofon (3- USB Audio CODEC )-R
                    <ComboArrow />
                  </Combo>
                  <Btn $w={27} $h={18}>Info</Btn>
                  <PathField>C:\...\Samplitude_Music_Studio_17_DLV\NEW02.wav</PathField>
                  <SideBtn $w={27} $h={18} $down={10}>
                    <FolderIcon />
                  </SideBtn>
                </DeviceBody>
              </Group>
              <ActionBox>
                <Btn $w={108} $h={20} $tone="default"><span><u>A</u>ufnahme</span></Btn>
                <Btn $w={81} $h={20} $tone="off"><span><u>S</u>topp</span></Btn>
                <Btn $w={96} $h={20} $tone="off"><span>Aufnahme<u>p</u>ause</span></Btn>
              </ActionBox>
            </LeftCol>
            <RightCol>
              <Group $w={263} $h={209}>
                <legend>Optionen</legend>
                <OptionsBody>
                  <MonitorLabel>Monitoring-Modus:</MonitorLabel>
                  <MonitorRow>
                    <Combo $w={164} $h={21} $off>
                      Peakmeter Monitoring
                      <ComboArrow $off />
                    </Combo>
                    <Btn $w={72} $h={19} $tone="blue"><span><u>M</u>onitor</span></Btn>
                  </MonitorRow>
                  <Spacer $h={5} />
                  <OptionRow $h={18}><CheckBox><TickMark /></CheckBox>Abspielen während der Aufnahme</OptionRow>
                  <OptionRow $h={18}><CheckBox><TickMark /></CheckBox>VIP-Objekt erzeugen</OptionRow>
                  <Spacer $h={2} />
                  <OptionRow $h={18}><CheckBox />Autom. Aufnahmestop</OptionRow>
                  <Spacer $h={2} />
                  <AutoRow>
                    <OptionRow $h={18}><CheckBox />Autom. CD-Track-Erkennung</OptionRow>
                    <VinylCombo $w={75} $h={21}>
                      Vinyl
                      <ComboArrow />
                    </VinylCombo>
                  </AutoRow>
                  <ExtraBtn $w={120} $h={19}>Erweiterte Optionen ...</ExtraBtn>
                </OptionsBody>
              </Group>
              <Group $w={263} $h={79} $top={1}>
                <legend>Aufnahmeinformation</legend>
                <InfoBody>
                  <InfoLines>
                    <span>Aufnahmezeit:</span>
                    <span>00:00:00:00</span>
                    <span>Rest-Zeit:</span>
                    <span>115:04:09:16</span>
                    <span>Platten-Spei. C:</span>
                    <span>115:04:09:16</span>
                  </InfoLines>
                  <InfoButtons>
                    <Btn $w={60} $h={13} $tone="blue">Visual.</Btn>
                    <Btn $w={60} $h={13}>Reset Pk.</Btn>
                    <Btn $w={60} $h={13}>Tuner</Btn>
                  </InfoButtons>
                </InfoBody>
              </Group>
              <TakeRow $top={9}>
                <TakeBtn $w={59} $h={18} $left={71}>Take +</TakeBtn>
                <TakeInput>Take07</TakeInput>
              </TakeRow>
              <TakeRow $top={7}>
                <Btn $w={60} $h={18}>CD-Marker</Btn>
                <TakeBtn $w={59} $h={18} $left={11}>Marker 1</TakeBtn>
                <TakeInput />
              </TakeRow>
            </RightCol>
          </MainPanel>
          <DialogFooter>
            <TrackTab>Track 2</TrackTab>
            <Btn $w={27} $h={19}>&lt;&lt;</Btn>
            <NavGap $w={4} />
            <Btn $w={27} $h={19} $tone="off">&gt;&gt;</Btn>
            <NavGap $w={341} />
            <Btn $w={87} $h={19}>Schließen</Btn>
            <NavGap $w={8} />
            <Btn $w={73} $h={19}>Hilfe...</Btn>
          </DialogFooter>
        </DialogBody>
      </Dialog>
    </Screen>
  );
}
